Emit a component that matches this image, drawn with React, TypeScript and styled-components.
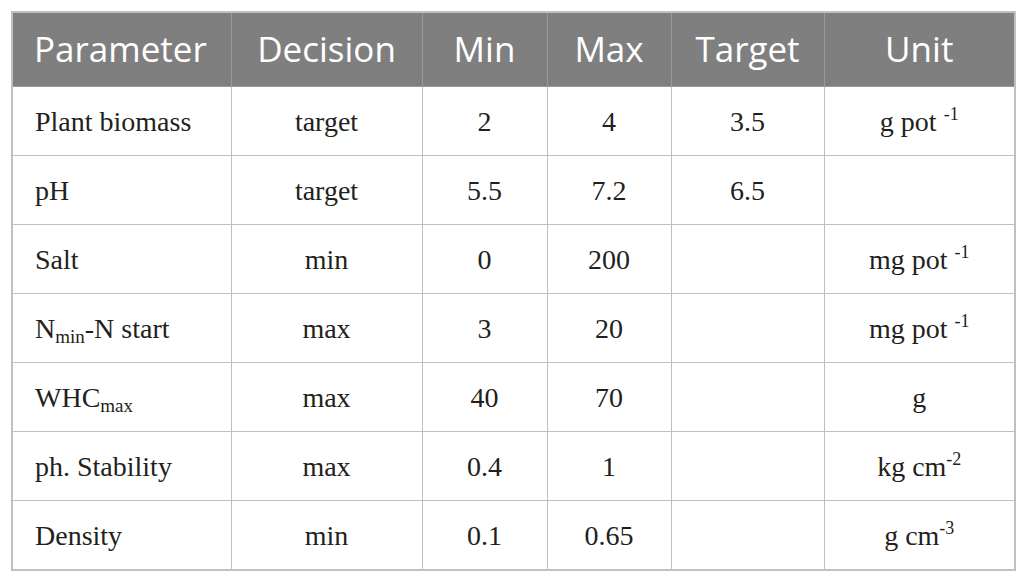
import React from "react";
import styled, { createGlobalStyle } from "styled-components";

const Global = createGlobalStyle`
  html, body { margin: 0; padding: 0; background: #ffffff; }
  #root { width: 1025px; height: 580px; }
`;

const Page = styled.div`
  box-sizing: border-box;
  width: 1025px;
  height: 580px;
  padding: 11px 11px 11px 11px;
`;

const Table = styled.table`
  width: 1003px;
  border-collapse: collapse;
  table-layout: fixed;
  border: 2px solid #c0c0c0;
`;

const HeadCell = styled.th<{ $left?: boolean }>`
  height: 71px;
  background: #7f7f7f;
  color: #ffffff;
  font-family: "Open Sans", "Noto Sans", sans-serif;
  font-weight: 400;
  font-size: 35px;
  line-height: 1;
  text-align: ${(p) => (p.$left ? "left" : "center")};
  padding: 0 0 2px ${(p) => (p.$left ? "21px" : "0")};
  border: 1px solid #9a9a9a;
  border-top: 0;
  vertical-align: middle;
  white-space: nowrap;
`;

const Cell = styled.td<{ $left?: boolean }>`
  height: 66px;
  color: #231f20;
  font-family: "Liberation Serif", "DejaVu Serif", serif;
  font-size: 28px;
  line-height: 1;
  text-align: ${(p) => (p.$left ? "left" : "center")};
  padding: 2px 0 0 ${(p) => (p.$left ? "22px" : "0")};
  border: 1px solid #c0c0c0;
  vertical-align: middle;
  white-space: nowrap;
`;

const Sub = styled.sub`
  font-size: 19px;
  vertical-align: -5px;
  line-height: 0;
`;

const Sup = styled.sup`
  font-size: 18px;
  vertical-align: 11px;
  line-height: 0;
`;

type Row = {
  param: React.ReactNode;
  decision: string;
  min: string;
  max: string;
  target: string;
  unit: React.ReactNode;
};

const rows: Row[] = [
  { param: "Plant biomass", decision: "target", min: "2", max: "4", target: "3.5", unit: <>g pot <Sup>-1</Sup></> },
  { param: "pH", decision: "target", min: "5.5", max: "7.2", target: "6.5", unit: "" },
  { param: "Salt", decision: "min", min: "0", max: "200", target: "", unit: <>mg pot <Sup>-1</Sup></> },
  { param: <>N<Sub>min</Sub>-N start</>, decision: "max", min: "3", max: "20", target: "", unit: <>mg pot <Sup>-1</Sup></> },
  { param: <>WHC<Sub>max</Sub></>, decision: "max", min: "40", max: "70", target: "", unit: "g" },
  { param: "ph. Stability", decision: "max", min: "0.4", max: "1", target: "", unit: <>kg cm<Sup>-2</Sup></> },
  { param: "Density", decision: "min", min: "0.1", max: "0.65", target: "", unit: <>g cm<Sup>-3</Sup></> },
];

const widths = [219, 191, 125, 124, 153, 191];

export default function App() {
  return (
    <Page>
      <Global />
      <Table>
        <colgroup>
          {widths.map((w, i) => (
            <col key={i} style={{ width: w }} />
          ))}
        </colgroup>
        <thead>
          <tr>
            <HeadCell $left>Parameter</HeadCell>
            <HeadCell>Decision</HeadCell>
            <HeadCell>Min</HeadCell>
            <HeadCell>Max</HeadCell>
            <HeadCell>Target</HeadCell>
            <HeadCell>Unit</HeadCell>
          </tr>
        </thead>
        <tbody>
          {rows.map((r, i) => (
            <tr key={i}>
              <Cell $left>{r.param}</Cell>
              <Cell>{r.decision}</Cell>
              <Cell>{r.min}</Cell>
              <Cell>{r.max}</Cell>
              <Cell>{r.target}</Cell>
              <Cell>{r.unit}</Cell>
            </tr>
          ))}
        </tbody>
      </Table>
    </Page>
  );
}
